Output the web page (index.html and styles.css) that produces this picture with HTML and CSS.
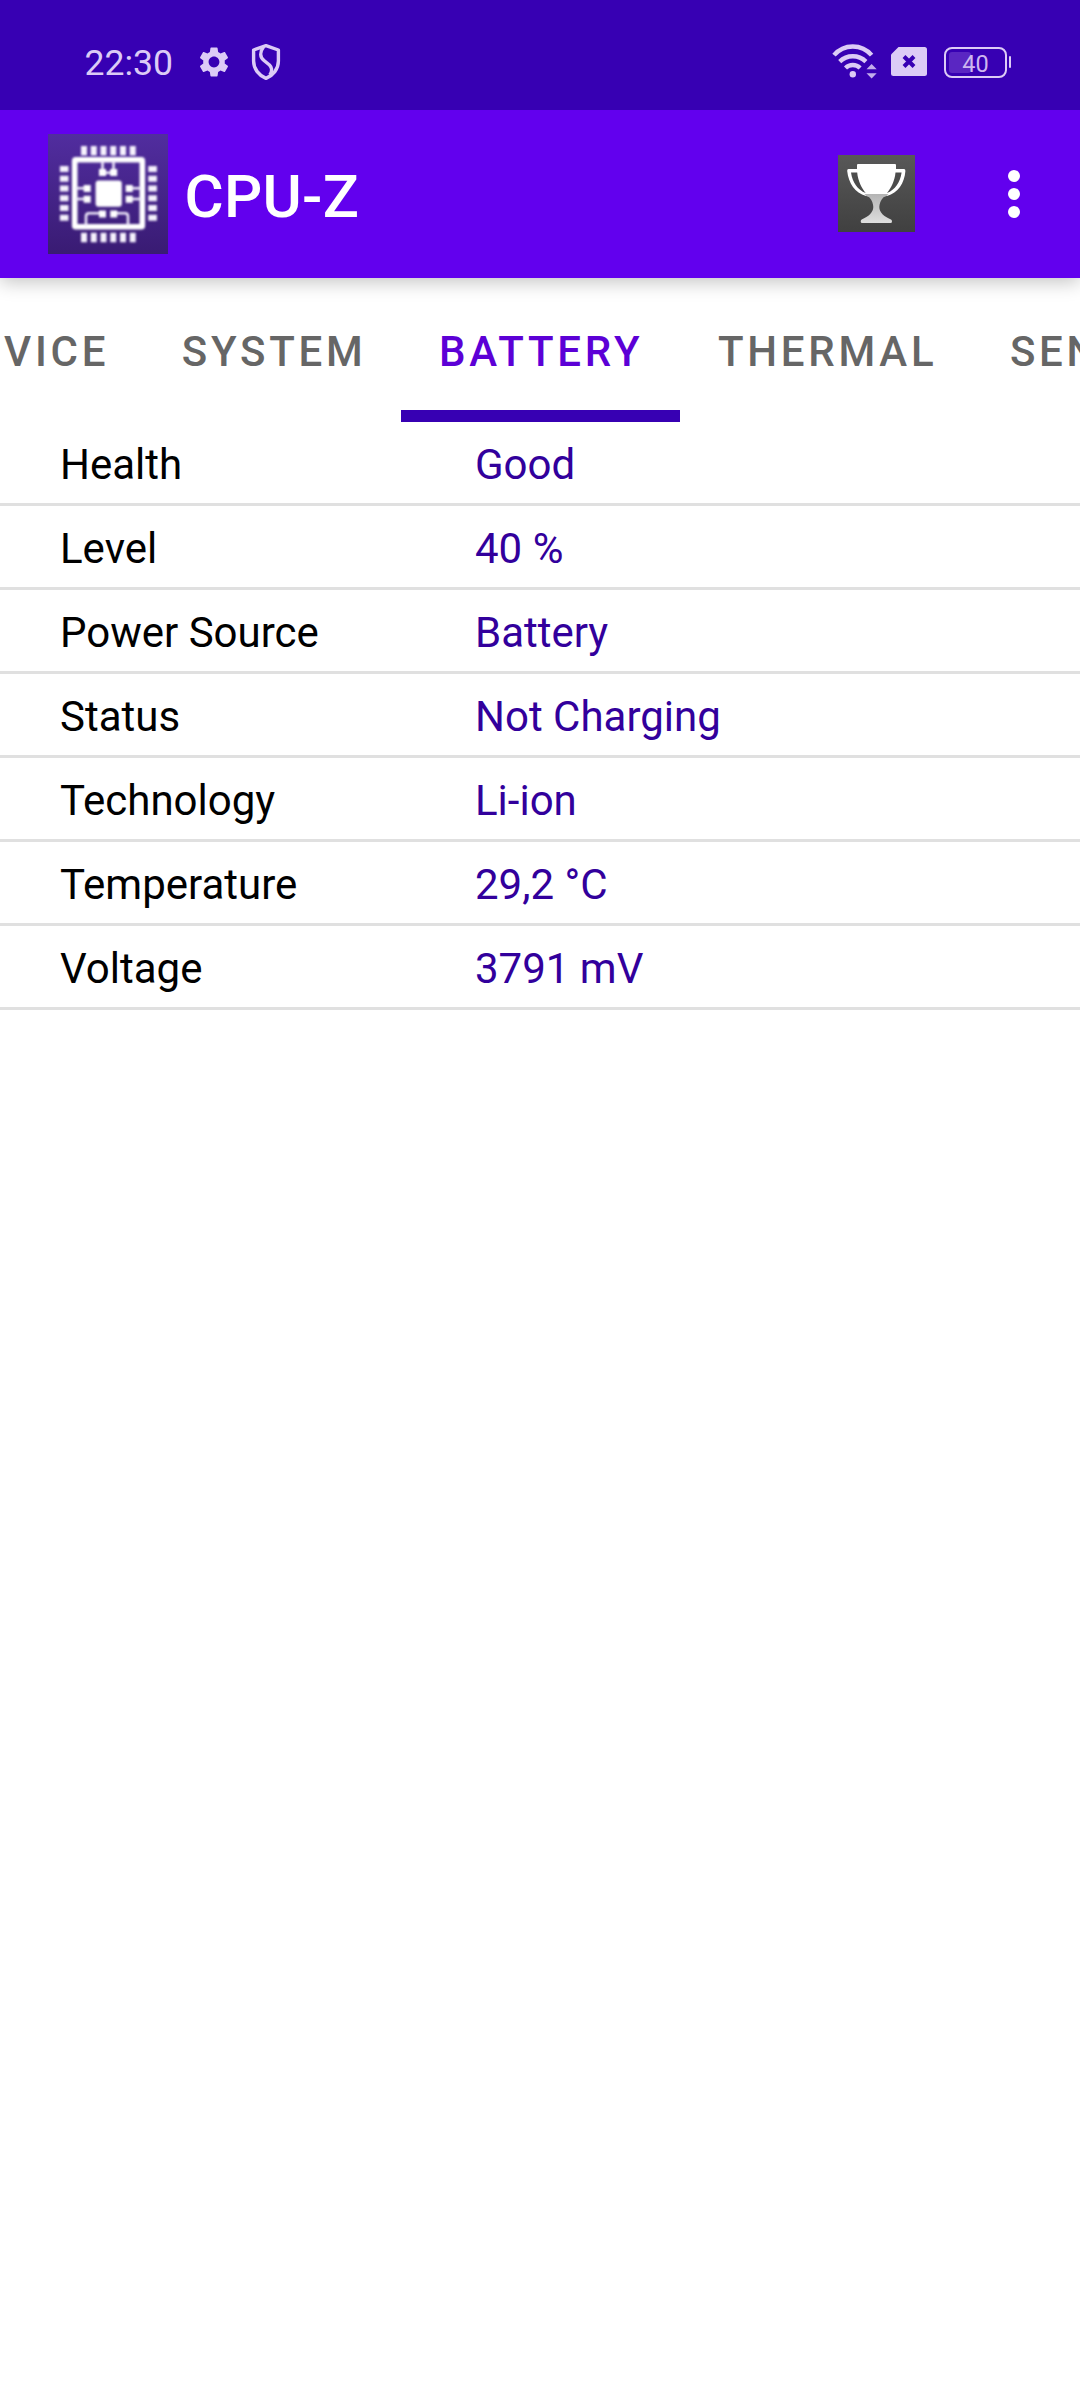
FILE: index.html
```html
<!DOCTYPE html>
<html lang="en">
<head>
<meta charset="utf-8">
<title>CPU-Z</title>
<link rel="stylesheet" href="styles.css">
</head>
<body>
<div class="status-bar">
  <span class="clock">22:30</span>
  <svg class="gear" width="36" height="36" viewBox="0 0 24 24"><path fill="currentColor" d="M19.14 12.94c.04-.3.06-.61.06-.94 0-.32-.02-.64-.07-.94l2.03-1.58c.18-.14.23-.41.12-.61l-1.92-3.32c-.12-.22-.37-.29-.59-.22l-2.39.96c-.5-.38-1.03-.7-1.62-.94l-.36-2.54c-.04-.24-.24-.41-.48-.41h-3.84c-.24 0-.43.17-.47.41l-.36 2.54c-.59.24-1.13.57-1.62.94l-2.39-.96c-.22-.08-.47 0-.59.22L2.74 8.87c-.12.21-.08.47.12.61l2.03 1.58c-.05.3-.09.63-.09.94s.02.64.07.94l-2.03 1.58c-.18.14-.23.41-.12.61l1.92 3.32c.12.22.37.29.59.22l2.39-.96c.5.38 1.03.7 1.62.94l.36 2.54c.05.24.24.41.48.41h3.84c.24 0 .44-.17.47-.41l.36-2.54c.59-.24 1.13-.56 1.62-.94l2.39.96c.22.08.47 0 .59-.22l1.92-3.32c.12-.22.07-.47-.12-.61l-2.01-1.58zM12 15.6c-1.98 0-3.6-1.62-3.6-3.6s1.62-3.6 3.6-3.6 3.6 1.62 3.6 3.6-1.62 3.6-3.6 3.6z"/></svg>
  <svg class="shield" width="30" height="38" viewBox="0 0 30 38" fill="none" stroke="currentColor" stroke-width="3.4" stroke-linejoin="round">
    <path d="M15 2.6 L27.4 7 V18 C27.4 26 22 32.5 15 35.4 C8 32.5 2.6 26 2.6 18 V7 Z"/>
    <path d="M12.5 4 C8.6 9 8.800 14 13 17.5 L18.5 22 C21.5 25 21.5 28 18.8 32"/>
  </svg>
  <div class="status-right">
    <svg width="46" height="38" viewBox="0 0 46 38" fill="none" stroke="currentColor" stroke-width="4.4">
      <path d="M2 12.2 A24.6 24.6 0 0 1 39.6 12.2"/>
      <path d="M7.7 18.6 A18.800 18.800 0 0 1 33.9 18.6"/>
      <path d="M13.5 25 A10.5 10.5 0 0 1 28.1 25"/>
      <circle cx="20.8" cy="31.3" r="3.2" fill="currentColor" stroke="none"/>
      <path d="M34.5 26.3 L39.6 21 L44.7 26.3 Z M34.5 30.2 L39.6 35.5 L44.7 30.2 Z" fill="currentColor" stroke="none" opacity=".85"/>
    </svg>
    <svg class="sim" width="36" height="30" viewBox="0 0 36 30"><path fill="currentColor" d="M7.5 0 H33.5 A2.5 2.5 0 0 1 36 2.5 V26.5 A2.5 2.5 0 0 1 33.5 29 H2.5 A2.5 2.5 0 0 1 0 26.5 V7.5 Z"/><path d="M13 9.5 L23 19.5 M23 9.5 L13 19.5" stroke="#3700b3" stroke-width="4"/></svg>
    <div class="battery"><span class="battery-level"></span><span class="battery-text">40</span></div>
    <span class="battery-nub"></span>
  </div>
</div>

<header class="app-bar">
  <svg class="logo" width="120" height="120" viewBox="0 0 120 120">
    <defs>
      <linearGradient id="logoBg" x1="0" y1="0" x2="0" y2="1"><stop offset="0" stop-color="#512d9f"/><stop offset="1" stop-color="#391b73"/></linearGradient>
      <filter id="soft" x="-10%" y="-10%" width="120%" height="120%"><feGaussianBlur stdDeviation=".9"/></filter>
      <filter id="softer" x="-10%" y="-10%" width="120%" height="120%"><feGaussianBlur stdDeviation="1.2"/></filter>
    </defs>
    <rect width="120" height="120" fill="url(#logoBg)"/>
    <g filter="url(#softer)" stroke="#f6f2fd" fill="none">
      <path stroke-width="9.5" stroke-dasharray="6 3.75" d="M33 16.7 H88.5 M33 103.6 H88.5"/>
      <path stroke-width="8.600" stroke-dasharray="6 3.75" d="M16.2 32 V87.5 M104.6 32 V87.5"/>
    </g>
    <g filter="url(#soft)" stroke="#efe9fa" fill="none">
      <rect x="26.7" y="25.7" width="67.6" height="67" rx="1" stroke="#fff" stroke-width="5.6"/>
      <path stroke-width="2.6" d="M54.5 27 V38 M65.5 27 V38 M27 54.3 H38 M27 65 H38 M94 54.3 H82 M94 65 H82 M54 79.3 H41 Q38 79.3 38 82.3 V92 M66 79.3 H77 Q80 79.3 80 82.3 V92 M54.5 38.7 H65.5"/>
    </g>
    <g filter="url(#soft)" fill="#fff">
      <rect x="47.6" y="46.6" width="26.2" height="26.2" rx="3"/>
      <path d="M51 35 h7 v7 h-7z M62.2 35 h7 v7 h-7z M51 76.5 h7 v7 h-7z M62.2 76.5 h7 v7 h-7z M35.7 51 h7 v7 h-7z M35.7 61.7 h7 v7 h-7z M77.7 51 h7 v7 h-7z M77.7 61.7 h7 v7 h-7z"/>
    </g>
  </svg>
  <h1 class="title">CPU-Z</h1>
  <svg class="trophy" width="77" height="77" viewBox="0 0 77 77">
    <defs>
      <linearGradient id="trophyBg" x1="0" y1="0" x2="0" y2="1"><stop offset="0" stop-color="#585858"/><stop offset="1" stop-color="#404040"/></linearGradient>
      <linearGradient id="stem" x1="0" y1="0" x2="0" y2="1"><stop offset="0" stop-color="#b4b4b4"/><stop offset="1" stop-color="#dedede"/></linearGradient>
    </defs>
    <rect width="77" height="77" fill="url(#trophyBg)"/>
    <path fill="#fff" d="M20 9 H57 Q58 9 58 10 V14 H66 Q67.5 14 67.4 16 C66.5 28 60 38 49 41 L46 39 H31 L28 41 C17 38 10.5 28 9.2 16 Q9 14 10.5 14 H19 V10 Q19 9 20 9 Z"/>
    <path fill="#4c4c4c" d="M13 17.4 H19.2 C20 26 23.5 32.5 27.7 38 C19.5 34.5 14.5 27.5 13 17.4 Z M63.6 17.4 H57.5 C56.7 26 53.2 32.5 49 38 C57.2 34.5 62.1 27.5 63.6 17.4 Z"/>
    <path fill="url(#stem)" d="M26.5 39 H50.5 Q48.5 42 45.5 42.2 C42.8 45 41.3 49 41.3 52 C41.3 57.5 46 61.5 53 64.5 Q54 65 54 66.5 Q54 68 52.5 68 H24.2 Q22.7 68 22.7 66.5 Q22.7 65 23.7 64.5 C30.5 61.5 35.3 57.5 35.3 52 C35.3 49 34 45 31.2 42.2 Q28 42 26.5 39 Z"/>
  </svg>
  <svg class="more" width="12" height="48" viewBox="0 0 12 48" fill="#fff"><circle cx="6" cy="6" r="6"/><circle cx="6" cy="24" r="6"/><circle cx="6" cy="42" r="6"/></svg>
</header>

<nav class="tabs">
  <span class="tab">DEVICE</span>
  <span class="tab">SYSTEM</span>
  <span class="tab active">BATTERY</span>
  <span class="tab">THERMAL</span>
  <span class="tab">SENSORS</span>
</nav>

<dl class="list">
  <div class="row"><dt>Health</dt><dd>Good</dd></div>
  <div class="row"><dt>Level</dt><dd>40 %</dd></div>
  <div class="row"><dt>Power Source</dt><dd>Battery</dd></div>
  <div class="row"><dt>Status</dt><dd>Not Charging</dd></div>
  <div class="row"><dt>Technology</dt><dd>Li-ion</dd></div>
  <div class="row"><dt>Temperature</dt><dd>29,2 °C</dd></div>
  <div class="row"><dt>Voltage</dt><dd>3791 mV</dd></div>
</dl>
</body>
</html>
```
FILE: styles.css
```css
* { box-sizing: border-box; }

body {
  margin: 0;
  width: 1080px;
  min-height: 2400px;
  background: #fff;
  font-family: Roboto, sans-serif;
  overflow: hidden;
}

.status-bar {
  display: flex;
  align-items: center;
  height: 110px;
  padding: 14px 69px 0 84.5px;
  background: #3700b3;
  color: #dccbf6;
}

.clock {
  width: 111.5px;
  padding-top: 2px;
  font-size: 35.6px;
  line-height: 42px;
}
.shield { margin-left: 19px; }

.status-right {
  display: flex;
  align-items: center;
  margin-left: auto;
}
.sim { margin-left: 13px; }

.battery {
  position: relative;
  display: flex;
  align-items: center;
  justify-content: center;
  width: 63px;
  height: 31px;
  margin: 1px 0 0 17px;
  border: 2px solid currentColor;
  border-radius: 8px;
}
.battery-level {
  position: absolute;
  left: 3px;
  top: 3px;
  width: 22px;
  height: 21px;
  border-radius: 3px;
  background: #5a26c2;
}
.battery-text {
  position: relative;
  padding-top: 2px;
  font-size: 23.5px;
  line-height: 26px;
  color: #cdb6f0;
}
.battery-nub {
  width: 2.5px;
  height: 12px;
  margin-left: 1.5px;
  border-radius: 1px;
  background: currentColor;
}

.app-bar {
  position: relative;
  display: flex;
  align-items: center;
  height: 168px;
  padding: 0 60px 0 48px;
  background: #6200ee;
  box-shadow: 0 4px 18px rgba(0, 0, 0, .24);
  clip-path: inset(0 0 -40px 0);
}
.title {
  margin: 6px 0 0 16.5px;
  font-size: 60px;
  font-weight: 500;
  line-height: 70px;
  letter-spacing: .3px;
  color: #fff;
}
.trophy { margin: 0 0 1px auto; }
.more { margin-left: 93px; }

.tabs {
  display: flex;
  height: 144px;
  margin-left: -92.6px;
  overflow: hidden;
}
.tab {
  flex: none;
  height: 144px;
  padding: 0 34.5px 0 38px;
  font-size: 42px;
  font-weight: 500;
  line-height: 148px;
  letter-spacing: 3.75px;
  color: #666;
}
.tab.active {
  padding-right: 36.6px;
  color: #5c00d6;
  border-bottom: 12px solid #3700b3;
}

.list { margin: 0; }
.row {
  display: grid;
  grid-template-columns: 415px 1fr;
  height: 84px;
  padding-left: 60px;
  border-bottom: 3px solid #e0e0e0;
  font-size: 42px;
  line-height: 85px;
}
.row dt { color: #000; }
.row dd { margin: 0; color: #32009c; }
```
